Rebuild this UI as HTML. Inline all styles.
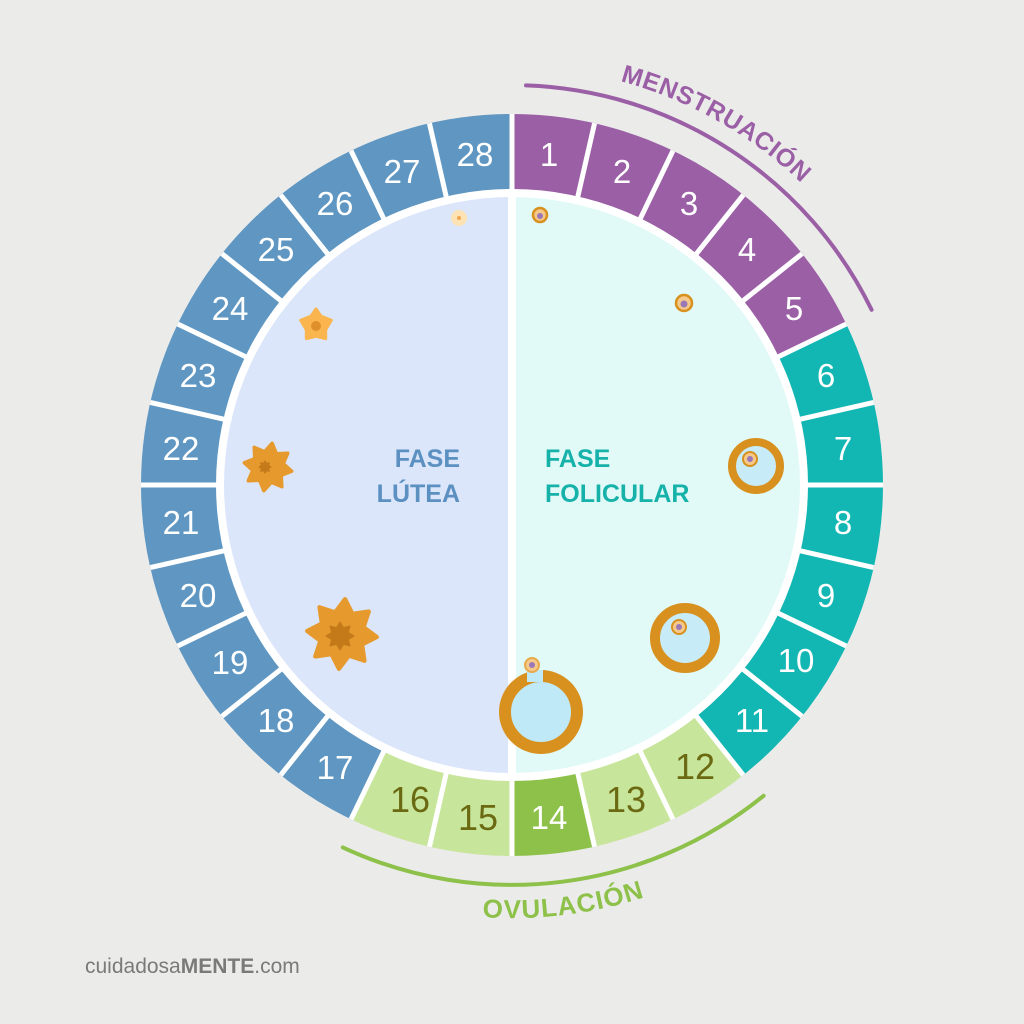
<!DOCTYPE html>
<html><head><meta charset="utf-8"><style>
html,body{margin:0;padding:0;background:#ebebea;}
svg{display:block}
</style></head><body>
<svg width="1024" height="1024" viewBox="0 0 1024 1024" xmlns="http://www.w3.org/2000/svg">
<defs>
<path id="star8" d="M0,-1 L.249,-.6 L.707,-.707 L.6,-.249 L1,0 L.6,.249 L.707,.707 L.249,.6 L0,1 L-.249,.6 L-.707,.707 L-.6,.249 L-1,0 L-.6,-.249 L-.707,-.707 L-.249,-.6 Z"/>
<path id="mpath" d="M620.3,81.2 A418 418 0 0 1 915.8,376.7"/>
<path id="opath" d="M363.9,892 A433 433 0 0 0 728.5,860"/>
</defs>
<rect width="1024" height="1024" fill="#ebebea"/>
<g transform="rotate(-90 512 485)" fill="none" stroke-width="78">
<circle cx="512" cy="485" r="333" stroke="#9b5fa6" stroke-dasharray="373.6 3000"/>
<circle cx="512" cy="485" r="333" stroke="#12b6b2" stroke-dasharray="448.4 3000" stroke-dashoffset="-373.6"/>
<circle cx="512" cy="485" r="333" stroke="#c8e59c" stroke-dasharray="373.6 3000" stroke-dashoffset="-822"/>
<circle cx="512" cy="485" r="333" stroke="#8dc149" stroke-dasharray="74.73 3000" stroke-dashoffset="-971.5"/>
<circle cx="512" cy="485" r="333" stroke="#5f97c2" stroke-dasharray="896.8 3000" stroke-dashoffset="-1195.6"/>
</g>
<g stroke="#fff" stroke-width="5">
<line x1="512" y1="485" x2="512" y2="114" transform="rotate(0 512 485)"/>
<line x1="512" y1="485" x2="512" y2="114" transform="rotate(12.857 512 485)"/>
<line x1="512" y1="485" x2="512" y2="114" transform="rotate(25.714 512 485)"/>
<line x1="512" y1="485" x2="512" y2="114" transform="rotate(38.571 512 485)"/>
<line x1="512" y1="485" x2="512" y2="114" transform="rotate(51.429 512 485)"/>
<line x1="512" y1="485" x2="512" y2="114" transform="rotate(64.286 512 485)"/>
<line x1="512" y1="485" x2="512" y2="114" transform="rotate(77.143 512 485)"/>
<line x1="512" y1="485" x2="512" y2="114" transform="rotate(90 512 485)"/>
<line x1="512" y1="485" x2="512" y2="114" transform="rotate(102.857 512 485)"/>
<line x1="512" y1="485" x2="512" y2="114" transform="rotate(115.714 512 485)"/>
<line x1="512" y1="485" x2="512" y2="114" transform="rotate(128.571 512 485)"/>
<line x1="512" y1="485" x2="512" y2="114" transform="rotate(141.429 512 485)"/>
<line x1="512" y1="485" x2="512" y2="114" transform="rotate(154.286 512 485)"/>
<line x1="512" y1="485" x2="512" y2="114" transform="rotate(167.143 512 485)"/>
<line x1="512" y1="485" x2="512" y2="114" transform="rotate(180 512 485)"/>
<line x1="512" y1="485" x2="512" y2="114" transform="rotate(192.857 512 485)"/>
<line x1="512" y1="485" x2="512" y2="114" transform="rotate(205.714 512 485)"/>
<line x1="512" y1="485" x2="512" y2="114" transform="rotate(218.571 512 485)"/>
<line x1="512" y1="485" x2="512" y2="114" transform="rotate(231.429 512 485)"/>
<line x1="512" y1="485" x2="512" y2="114" transform="rotate(244.286 512 485)"/>
<line x1="512" y1="485" x2="512" y2="114" transform="rotate(257.143 512 485)"/>
<line x1="512" y1="485" x2="512" y2="114" transform="rotate(270 512 485)"/>
<line x1="512" y1="485" x2="512" y2="114" transform="rotate(282.857 512 485)"/>
<line x1="512" y1="485" x2="512" y2="114" transform="rotate(295.714 512 485)"/>
<line x1="512" y1="485" x2="512" y2="114" transform="rotate(308.571 512 485)"/>
<line x1="512" y1="485" x2="512" y2="114" transform="rotate(321.429 512 485)"/>
<line x1="512" y1="485" x2="512" y2="114" transform="rotate(334.286 512 485)"/>
<line x1="512" y1="485" x2="512" y2="114" transform="rotate(347.143 512 485)"/>
</g>
<circle cx="512" cy="485" r="374" fill="none" stroke="#ebebea" stroke-width="6"/>
<circle cx="512" cy="485" r="296" fill="#fff"/>
<path d="M512,197 A288 288 0 0 0 512,773 Z" fill="#dbe6fb"/>
<path d="M512,197 A288 288 0 0 1 512,773 Z" fill="#e1faf7"/>
<rect x="508" y="190" width="8" height="590" fill="#fff"/>

<g font-family="Liberation Sans, sans-serif" font-size="33" fill="#fff" text-anchor="middle">
<text x="549" y="166">1</text><text x="622" y="183">2</text><text x="689" y="215">3</text>
<text x="747" y="261">4</text><text x="794" y="320">5</text><text x="826" y="387">6</text>
<text x="843" y="460">7</text><text x="843" y="534">8</text><text x="826" y="607">9</text>
<text x="796" y="672">10</text><text x="752" y="732">11</text>
<text x="549" y="829">14</text>
<text x="335" y="779">17</text><text x="276" y="732">18</text><text x="230" y="674">19</text>
<text x="198" y="607">20</text><text x="181" y="534">21</text><text x="181" y="460">22</text>
<text x="198" y="387">23</text><text x="230" y="320">24</text><text x="276" y="261">25</text>
<text x="335" y="215">26</text><text x="402" y="183">27</text><text x="475" y="166">28</text>
</g>
<g font-family="Liberation Sans, sans-serif" font-size="36" fill="#6b6a12" text-anchor="middle">
<text x="695" y="779">12</text><text x="626" y="812">13</text><text x="478" y="830">15</text><text x="410" y="812">16</text>
</g>

<path d="M526,85.4 A400 400 0 0 1 871.6,309.8" fill="none" stroke="#9b5fa6" stroke-width="4" stroke-linecap="round"/>
<text font-family="Liberation Sans, sans-serif" font-weight="bold" font-size="25" fill="#9b5fa6" letter-spacing="0.5"><textPath href="#mpath">MENSTRUACIÓN</textPath></text>
<path d="M763.6,795.8 A400 400 0 0 1 342.8,847.4" fill="none" stroke="#8dc149" stroke-width="4" stroke-linecap="round"/>
<text font-family="Liberation Sans, sans-serif" font-weight="bold" font-size="26" fill="#8dc149" text-anchor="middle" letter-spacing="1"><textPath href="#opath" startOffset="54%">OVULACIÓN</textPath></text>

<g font-family="Liberation Sans, sans-serif" font-weight="bold" font-size="25">
<text x="460" y="467" fill="#5b90c0" text-anchor="end">FASE</text>
<text x="460" y="502" fill="#5b90c0" text-anchor="end">LÚTEA</text>
<text x="545" y="467" fill="#16b2aa">FASE</text>
<text x="545" y="502" fill="#16b2aa">FOLICULAR</text>
</g>

<circle cx="459" cy="218" r="8" fill="#fde2b3"/><circle cx="459" cy="218" r="2" fill="#f2a650"/>
<circle cx="540" cy="215" r="7" fill="#f5c98a" stroke="#d8901f" stroke-width="2.5"/><circle cx="540" cy="216" r="3" fill="#9a78b5"/>
<circle cx="684" cy="303" r="8" fill="#f5c98a" stroke="#d8901f" stroke-width="2.5"/><circle cx="684" cy="304" r="3.5" fill="#9a78b5"/>
<circle cx="756" cy="466" r="24" fill="#c7ecf7" stroke="#d8901f" stroke-width="8"/>
<circle cx="750" cy="459" r="7" fill="#f5c98a" stroke="#d8901f" stroke-width="2"/><circle cx="750" cy="459" r="3" fill="#9a78b5"/>
<circle cx="685" cy="638" r="30" fill="#c7ecf7" stroke="#d8901f" stroke-width="10"/>
<circle cx="679" cy="627" r="7" fill="#f5c98a" stroke="#d8901f" stroke-width="2"/><circle cx="679" cy="627" r="3" fill="#9a78b5"/>
<circle cx="541" cy="712" r="36" fill="#bfe9f6" stroke="#d8901f" stroke-width="12"/>
<rect x="527" y="670" width="16" height="12" fill="#bfe9f6"/>
<circle cx="532" cy="665" r="7" fill="#f5c98a" stroke="#e8a94a" stroke-width="2"/><circle cx="532" cy="665" r="3" fill="#9a78b5"/>
<path d="M0,-1 L.3,-.55 L.95,-.3 L.6,.3 L.6,.85 L0,.7 L-.6,.85 L-.6,.3 L-.95,-.3 L-.3,-.55 Z" transform="translate(316 325) scale(16)" fill="#fbb54f" stroke="#fbb54f" stroke-width=".2" stroke-linejoin="round"/>
<circle cx="316" cy="326" r="5" fill="#e0902a"/>
<use href="#star8" transform="translate(268 467) scale(24) rotate(10)" fill="#e69a2e" stroke="#e69a2e" stroke-width=".15" stroke-linejoin="round"/>
<use href="#star8" transform="translate(265 467) scale(7)" fill="#c57a1a"/>
<use href="#star8" transform="translate(342 634) scale(35) rotate(5)" fill="#e69a2e" stroke="#e69a2e" stroke-width=".12" stroke-linejoin="round"/>
<use href="#star8" transform="translate(340 636) scale(15)" fill="#c57a1a"/>

<text x="85" y="973" font-family="Liberation Sans, sans-serif" font-size="21" fill="#7a7a7a">cuidadosa<tspan font-weight="bold">MENTE</tspan>.com</text>
</svg>
</body></html>
